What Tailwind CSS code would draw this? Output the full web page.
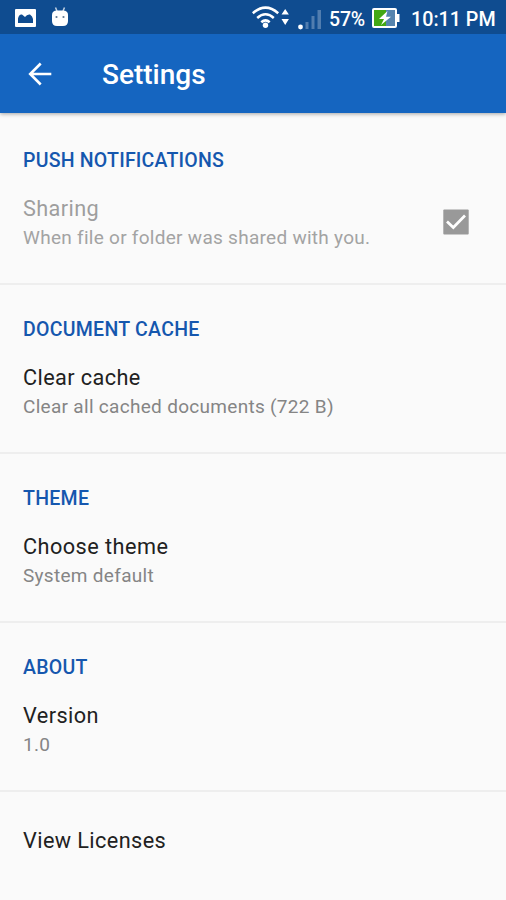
<!DOCTYPE html>
<html lang="en">
<head>
<meta charset="utf-8">
<title>Settings</title>
<script src="https://cdn.jsdelivr.net/npm/@tailwindcss/browser@4"></script>
</head>
<body class="bg-[#fafafa] font-[Roboto,sans-serif] w-[506px] h-[900px] overflow-hidden flex flex-col">
<header class="shrink-0 text-white bg-[#1565c0] shadow-[0_1px_4px_rgba(0,0,0,0.35)]">
  <div class="h-[34px] bg-[#0f4c90] flex items-center pl-[15px] pr-[11px]">
    <svg class="mt-[2px] w-[21px] h-[18px]" viewBox="0 0 21 18"><rect width="21" height="18" rx="1" fill="#fff"/><path d="M3 14V9.500Q4 5 7 5.500L10 8Q12 5 15 5.500Q17.500 7 18 10V14Z" fill="#0f4c90"/></svg>
    <svg class="ml-[15px] w-[18px] h-[20px]" viewBox="0 0 18 20"><path d="M4.500 0.500L6 4M13.500 0.500L12 4" stroke="#fff" stroke-opacity=".75" stroke-width="1.500"/><path d="M1 8Q1 3.500 6 3.500H12Q17 3.500 17 8V14Q17 19 12 19H6Q1 19 1 14Z" fill="#fff"/><circle cx="5.500" cy="10" r="1.100" fill="#5f7892"/><circle cx="12.500" cy="10" r="1.100" fill="#5f7892"/></svg>
    <svg class="ml-auto w-[38px] h-[24px]" viewBox="0 0 38 24"><g fill="none" stroke="#fff" stroke-width="2.500"><path d="M0.800 8.200Q13.500 -3 26.200 8.200"/><path d="M5.200 13Q13.500 5.500 21.800 13"/><path d="M9.300 17.300Q13.500 13.500 17.700 17.300"/></g><circle cx="13.500" cy="20.300" r="2.700" fill="#fff"/><path d="M29.500 9.500L33.200 4L36.900 9.500ZM29.500 14L33.200 20L36.900 14Z" fill="#fff"/></svg>
    <svg class="ml-[8px] mt-[5px] w-[24px] h-[21px]" viewBox="0 0 24 21"><circle cx="2.500" cy="18" r="2.400" fill="#fff"/><g fill="#fff" fill-opacity=".28"><rect x="7.500" y="13" width="3" height="7"/><rect x="13.500" y="7" width="3" height="13"/><rect x="19.500" y="1" width="3.500" height="19"/></g></svg>
    <span class="ml-[7px] w-[37px] text-[19.500px] font-medium leading-6 pt-[5px] whitespace-nowrap tracking-[-0.2px]">57%</span>
    <svg class="ml-[6px] mt-[2px] w-[28px] h-[20px]" viewBox="0 0 28 20"><rect x="1" y="1" width="23" height="18" rx="1" fill="#5684ae" stroke="#fff" stroke-width="2"/><path d="M2 2H14V18H2Z" fill="#43a814"/><path d="M24 6H27.500V14H24Z" fill="#fff"/><path d="M15.500 3L7 11H12L9 17L19 8.800H14Z" fill="#fff"/></svg>
    <span class="ml-[11px] w-[84px] text-[19.700px] font-medium leading-6 pt-[5px] whitespace-nowrap">10:11 PM</span>
  </div>
  <div class="h-[79px] flex items-center pl-[28px]">
    <svg class="w-[24px] h-[24px]" viewBox="0 0 24 24" fill="none" stroke="#fff" stroke-width="2.600"><path d="M23.300 12H2.500M12.700 1.500L2.200 12L12.700 22.500"/></svg>
    <h1 class="ml-[50px] text-[28px] font-medium leading-8 pt-0.5">Settings</h1>
  </div>
</header>
<main class="pt-[3px] text-[#212121]">
  <section class="h-[169px] px-[23px] pt-[33px] border-b-2 border-[#eeeeee]">
    <h2 class="text-[19.500px] leading-6 font-medium text-[#1557ae] tracking-[0.22px]">PUSH NOTIFICATIONS</h2>
    <div class="mt-[21px] flex justify-between items-center pr-[14px]">
      <div>
        <p class="text-[21.700px] leading-[30px] tracking-[0.4px] text-[#9e9e9e]">Sharing</p>
        <p class="text-[19px] leading-7 tracking-[0.28px] text-[#a3a3a3]">When file or folder was shared with you.</p>
      </div>
      <svg class="w-[26px] h-[26px] -mt-[2px]" viewBox="0 0 26 26"><rect x=".3" y=".5" width="25.400" height="25" rx="1" fill="#999"/><path d="M4 12.500L10.300 18.500L22 6.500" fill="none" stroke="#fff" stroke-width="2.700"/></svg>
    </div>
  </section>
  <section class="h-[169px] px-[23px] pt-[33px] border-b-2 border-[#eeeeee]">
    <h2 class="text-[19.500px] leading-6 font-medium text-[#1557ae] tracking-[0.28px]">DOCUMENT CACHE</h2>
    <p class="mt-[21px] text-[21.700px] leading-[30px] tracking-[0.4px]">Clear cache</p>
    <p class="text-[19px] leading-7 tracking-[0.3px] text-[#858585]">Clear all cached documents (722 B)</p>
  </section>
  <section class="h-[169px] px-[23px] pt-[33px] border-b-2 border-[#eeeeee]">
    <h2 class="text-[19.500px] leading-6 font-medium text-[#1557ae] tracking-[0.28px]">THEME</h2>
    <p class="mt-[21px] text-[21.700px] leading-[30px] tracking-[0.45px]">Choose theme</p>
    <p class="text-[19px] leading-7 tracking-[0.3px] text-[#858585]">System default</p>
  </section>
  <section class="h-[169px] px-[23px] pt-[33px] border-b-2 border-[#eeeeee]">
    <h2 class="text-[19.500px] leading-6 font-medium text-[#1557ae] tracking-[0.28px]">ABOUT</h2>
    <p class="mt-[21px] text-[21.700px] leading-[30px] tracking-[0.4px]">Version</p>
    <p class="text-[19px] leading-7 tracking-[0.3px] text-[#858585]">1.0</p>
  </section>
  <p class="px-[23px] pt-[34px] text-[21.700px] leading-[30px] tracking-[0.4px]">View Licenses</p>
</main>
</body>
</html>
